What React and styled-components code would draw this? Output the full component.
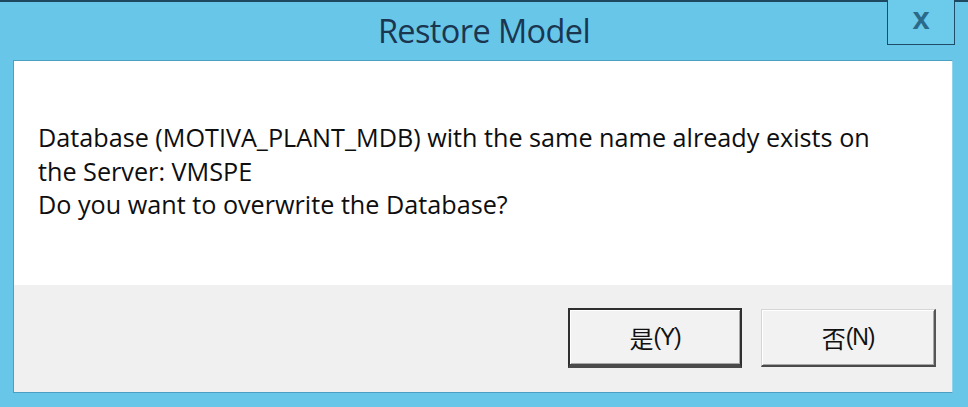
import React from 'react';
import styled, { createGlobalStyle } from 'styled-components';

const GlobalStyle = createGlobalStyle`
	html, body {
		margin: 0;
		padding: 0;
		background: #67c6e7;
	}
	body {
		font-family: "Open Sans", "Noto Sans", sans-serif;
	}
`;

const Window = styled.div`
	width: 968px;
	height: 407px;
	box-sizing: border-box;
	display: flex;
	flex-direction: column;
	background: #68c7e8;
	border-top: 2px solid #1e4860;
`;

const TitleBar = styled.div`
	height: 58px;
	display: grid;
	grid-template-columns: 1fr auto 1fr;
	align-items: start;
`;

const Title = styled.h1`
	grid-column: 2;
	margin: 6px 0 0;
	font-family: "Open Sans", "Noto Sans", sans-serif;
	font-weight: 400;
	font-size: 32.5px;
	letter-spacing: -0.6px;
	color: #1b3650;
`;

const CloseButton = styled.button`
	grid-column: 3;
	justify-self: end;
	margin: -2px 13px 0 0;
	width: 68px;
	height: 45px;
	box-sizing: border-box;
	border: 1.5px solid #1f4b66;
	border-top: none;
	background: #6ccaea;
	color: #2b6988;
	font-family: "Liberation Sans", Arial, sans-serif;
	font-weight: 700;
	font-size: 31px;
	line-height: 1;
	padding: 0 0 8px;
	display: flex;
	align-items: center;
	justify-content: center;
`;

const Frame = styled.div`
	flex: 1;
	margin: 0 15px 14px 13px;
	display: flex;
	flex-direction: column;
	border: 1px solid #4a9fc3;
	border-right-color: #8fd4ec;
`;

const Body = styled.div`
	height: 224px;
	box-sizing: border-box;
	background: #ffffff;
	padding: 60px 24px 0;
`;

const Message = styled.p`
	margin: 0;
	font-size: 25.2px;
	line-height: 33.5px;
	color: #0e0e0e;
`;

const Footer = styled.div`
	flex: 1;
	background: #f0f0f0;
	display: flex;
	justify-content: flex-end;
	align-items: flex-start;
	gap: 19px;
	padding: 23px 16px 0 0;
`;

const DialogButton = styled.button`
	width: ${p => (p.$default ? 174 : 175)}px;
	height: ${p => (p.$default ? 60 : 58)}px;
	margin-top: ${p => (p.$default ? 0 : 1)}px;
	box-sizing: border-box;
	background: #f2f2f2;
	border: ${p => (p.$default ? '2px solid #2f2f2f' : '1px solid #d6d6d6')};
	border-right: 2px solid ${p => (p.$default ? '#2f2f2f' : '#555')};
	border-bottom: ${p => (p.$default ? '4px solid #4a4a4a' : '2px solid #4a4a4a')};
	box-shadow: inset 1px 1px 0 #ffffff, inset -1px -1px 0 #a8a8a8;
	font-family: "Liberation Sans", Arial, "Noto Sans CJK SC", sans-serif;
	font-size: 23px;
	color: #111;
	padding: 0;
	display: flex;
	align-items: center;
	justify-content: center;
	letter-spacing: -1.2px;
`;

const Han = styled.span`
	font-family: "Noto Sans CJK SC", sans-serif;
	font-size: 24px;
	letter-spacing: 0;
`;

export default function App() {
	return (
		<>
			<GlobalStyle />
			<Window>
				<TitleBar>
					<Title>Restore Model</Title>
					<CloseButton aria-label="Close">x</CloseButton>
				</TitleBar>
				<Frame>
					<Body>
						<Message>Database (MOTIVA_PLANT_MDB) with the same name already exists on</Message>
						<Message>the Server: VMSPE</Message>
						<Message>Do you want to overwrite the Database?</Message>
					</Body>
					<Footer>
						<DialogButton $default><Han>是</Han>(Y)</DialogButton>
						<DialogButton><Han>否</Han>(N)</DialogButton>
					</Footer>
				</Frame>
			</Window>
		</>
	);
}
